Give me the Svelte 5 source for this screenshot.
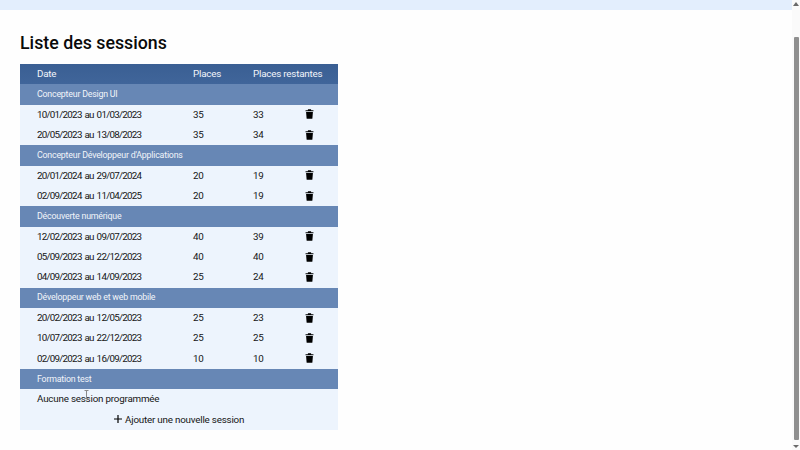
<script>
	const groups = [
		{
			name: "Concepteur Design UI",
			sessions: [
				{ date: "10/01/2023 au 01/03/2023", places: 35, left: 33 },
				{ date: "20/05/2023 au 13/08/2023", places: 35, left: 34 },
			],
		},
		{
			name: "Concepteur Développeur d'Applications",
			sessions: [
				{ date: "20/01/2024 au 29/07/2024", places: 20, left: 19 },
				{ date: "02/09/2024 au 11/04/2025", places: 20, left: 19 },
			],
		},
		{
			name: "Découverte numérique",
			sessions: [
				{ date: "12/02/2023 au 09/07/2023", places: 40, left: 39 },
				{ date: "05/09/2023 au 22/12/2023", places: 40, left: 40 },
				{ date: "04/09/2023 au 14/09/2023", places: 25, left: 24 },
			],
		},
		{
			name: "Développeur web et web mobile",
			sessions: [
				{ date: "20/02/2023 au 12/05/2023", places: 25, left: 23 },
				{ date: "10/07/2023 au 22/12/2023", places: 25, left: 25 },
				{ date: "02/09/2023 au 16/09/2023", places: 10, left: 10 },
			],
		},
		{ name: "Formation test", sessions: [] },
	];
</script>

<div class="page">
	<div class="topbar"></div>
	<main class="content">
		<h1>Liste des sessions</h1>
		<table>
			<colgroup>
				<col class="c-date" />
				<col class="c-places" />
				<col class="c-left" />
				<col class="c-action" />
			</colgroup>
			<thead>
				<tr>
					<th>Date</th>
					<th>Places</th>
					<th colspan="2">Places restantes</th>
				</tr>
			</thead>
			<tbody>
				{#each groups as group}
					<tr class="group"><td colspan="4">{group.name}</td></tr>
					{#each group.sessions as s}
						<tr>
							<td class="date">{s.date}</td>
							<td>{s.places}</td>
							<td>{s.left}</td>
							<td>
								<svg class="trash" viewBox="0 0 10 11" width="9" height="10" aria-hidden="true">
									<path d="M3.4 0.3h3.2l0.4 0.9h2.4v1.3H0.6V1.2H3zM1.2 3.2h7.6l-0.6 7.2a0.6 0.6 0 0 1-0.6 0.5H2.4a0.6 0.6 0 0 1-0.6-0.5z" />
								</svg>
							</td>
						</tr>
					{/each}
					{#if group.sessions.length === 0}
						<tr><td colspan="4">Aucune session programmée</td></tr>
					{/if}
				{/each}
				<tr class="add">
					<td colspan="4">
						<svg class="plus" viewBox="0 0 8 8" width="8" height="8" aria-hidden="true">
							<path d="M3.4 0h1.2v3.4H8v1.2H4.6V8H3.4V4.6H0V3.4h3.4z" />
						</svg>
						Ajouter une nouvelle session
					</td>
				</tr>
			</tbody>
		</table>
	</main>
	<svg class="cursor" viewBox="0 0 5 9" width="5" height="9" aria-hidden="true">
		<path d="M0.5 0.5h4M0.5 8.5h4M2.5 0.5v8" />
	</svg>
	<div class="scrollbar">
		<span class="arrow up"></span>
		<span class="thumb"></span>
		<span class="arrow down"></span>
	</div>
</div>

<style>
	:global(body) {
		margin: 0;
		background: #fefefe;
		overflow: hidden;
	}

	.page {
		position: relative;
		height: 450px;
		font-family: Roboto, "Open Sans", sans-serif;
		color: #151515;
	}

	.topbar {
		height: 10px;
		background: #e3eefd;
	}

	.content {
		padding: 21px 0 0 20px;
	}

	h1 {
		margin: 0 0 9px;
		font-size: 17.8px;
		line-height: 24px;
		font-weight: 500;
		color: #0a0a0a;
	}

	table {
		width: 318px;
		table-layout: fixed;
		border-collapse: collapse;
		font-size: 9.8px;
		letter-spacing: -0.2px;
		background: #edf4fd;
	}

	.c-date {
		width: 156px;
	}

	.c-places {
		width: 60px;
	}

	.c-left {
		width: 52px;
	}

	.c-action {
		width: 50px;
	}

	th,
	td {
		box-sizing: border-box;
		height: 20.33px;
		padding: 0 0 1px 17px;
		text-align: left;
		white-space: nowrap;
	}

	th {
		background: linear-gradient(#3a5f93, #40659a);
		color: #f2f5fa;
		font-weight: 400;
	}

	.group td {
		background: #6787b5;
		color: #f2f5fa;
		font-size: 8.8px;
	}

	td.date {
		letter-spacing: -0.75px;
		word-spacing: 1.2px;
	}

	.add td {
		padding: 0 0 1px;
		text-align: center;
	}

	.plus {
		vertical-align: -0.5px;
		margin-right: 1px;
		fill: #000;
	}

	.trash {
		display: block;
		fill: #000;
	}

	.cursor {
		position: absolute;
		left: 84px;
		top: 390px;
		fill: none;
		stroke: #8a8a8a;
		stroke-width: 1;
	}

	.scrollbar {
		position: absolute;
		top: 0;
		right: 0;
		bottom: 0;
		width: 8px;
		background: #fafafa;
		display: flex;
		flex-direction: column;
		align-items: center;
	}

	.thumb {
		width: 5px;
		height: 403px;
		margin: 31px 0 0;
		background: #8f8f8f;
		border-radius: 1px;
	}

	.arrow {
		width: 0;
		height: 0;
		border-left: 3px solid transparent;
		border-right: 3px solid transparent;
	}

	.up {
		margin-top: 2px;
		border-bottom: 4px solid #6a6a6a;
	}

	.down {
		margin-top: 5px;
		border-top: 3px solid #6a6a6a;
	}
</style>
